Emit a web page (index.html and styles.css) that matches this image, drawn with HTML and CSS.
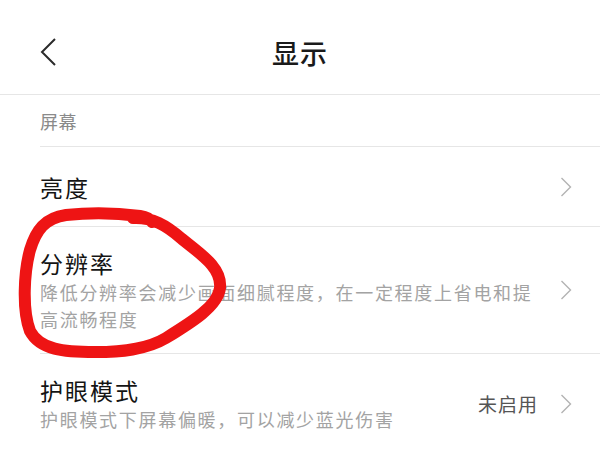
FILE: index.html
```html
<!DOCTYPE html>
<html lang="zh-CN">
<head>
    <meta charset="UTF-8">
    <meta name="viewport" content="width=device-width, initial-scale=1.0">
    <title>显示</title>
    <link rel="stylesheet" href="styles.css">
</head>
<body>
    <div class="header">
        <div class="back">
            <svg width="16" height="28" viewBox="0 0 16 28"><path d="M15 1 L2 14 L15 27" fill="none" stroke="#2b2b2b" stroke-width="2"/></svg>
        </div>
        <h1 class="title">显示</h1>
        <div></div>
    </div>

    <div class="list">
        <div class="section-label">屏幕</div>

        <div class="row row-single">
            <div class="row-text">
                <div class="row-title">亮度</div>
            </div>
            <div class="row-right">
                <svg class="chevron" width="12" height="20" viewBox="0 0 12 20"><path d="M1.5 1 L10.5 10 L1.5 19" fill="none" stroke="#b3b3b3" stroke-width="1.4"/></svg>
            </div>
        </div>

        <div class="row">
            <div class="row-text">
                <div class="row-title">分辨率</div>
                <div class="row-desc">降低分辨率会减少画面细腻程度，在一定程度上省电和提高流畅程度</div>
            </div>
            <div class="row-right">
                <svg class="chevron" width="12" height="20" viewBox="0 0 12 20"><path d="M1.5 1 L10.5 10 L1.5 19" fill="none" stroke="#b3b3b3" stroke-width="1.4"/></svg>
            </div>
        </div>

        <div class="row">
            <div class="row-text">
                <div class="row-title">护眼模式</div>
                <div class="row-desc">护眼模式下屏幕偏暖，可以减少蓝光伤害</div>
            </div>
            <div class="row-right">
                <span class="row-value">未启用</span>
                <svg class="chevron" width="12" height="20" viewBox="0 0 12 20"><path d="M1.5 1 L10.5 10 L1.5 19" fill="none" stroke="#b3b3b3" stroke-width="1.4"/></svg>
            </div>
        </div>
    </div>

    <!-- hand-drawn annotation over the screenshot -->
    <svg class="scribble" width="600" height="450" viewBox="0 0 600 450">
        <path d="M133 218 C152 217 166 225 182 239 C202 255 222 268 220 288 C218 306 192 322 166 338 C146 350 120 352 95 352 C64 352 40 350 30 331 C22 310 24 272 30 250 C36 230 45 218 66 215 C92 212 118 213 140 216 C146 217 150 219 152 222"
              fill="none" stroke="#ee1414" stroke-width="12" stroke-linecap="round" stroke-linejoin="round"/>
    </svg>
</body>
</html>
```

FILE: styles.css
```css
body {
    margin: 0;
    background: #fff;
    font-family: "Noto Sans CJK SC", "Noto Sans", sans-serif;
    color: #1a1a1a;
    overflow: hidden;
}
.header {
    display: grid;
    grid-template-columns: 1fr auto 1fr;
    align-items: center;
    height: 82px;
    padding-top: 12px;
    border-bottom: 1px solid #e6e6e6;
}
.back {
    padding-left: 40px;
    display: flex;
    align-items: center;
    margin-top: -3px;
}
.title {
    margin: 0;
    font-size: 27px;
    font-weight: 500;
    letter-spacing: 1px;
    line-height: 30px;
}
.list {
    padding-left: 40px;
}
.section-label {
    height: 51px;
    display: flex;
    align-items: center;
    font-size: 18px;
    letter-spacing: 0.5px;
    color: #8a8a8a;
    border-bottom: 1px solid #e6e6e6;
}
.row {
    display: flex;
    align-items: center;
    padding: 20px 28px 20px 0;
    border-bottom: 1px solid #e6e6e6;
}
.row-single {
    height: 79px;
    padding-top: 0;
    padding-bottom: 0;
}
.row-text {
    flex: 1;
    min-width: 0;
}
.row-title {
    font-size: 23px;
    line-height: 32px;
    letter-spacing: 2px;
    color: #141414;
}
.row-desc {
    font-size: 18px;
    line-height: 27px;
    letter-spacing: 1.7px;
    color: #a3a3a3;
}
.row-right {
    display: flex;
    align-items: center;
    margin-left: 20px;
}
.row-value {
    font-size: 19px;
    letter-spacing: 1px;
    color: #555;
    margin-right: 22px;
}
.chevron {
    display: block;
}
.scribble {
    position: absolute;
    top: 0;
    left: 0;
    pointer-events: none;
}
```
